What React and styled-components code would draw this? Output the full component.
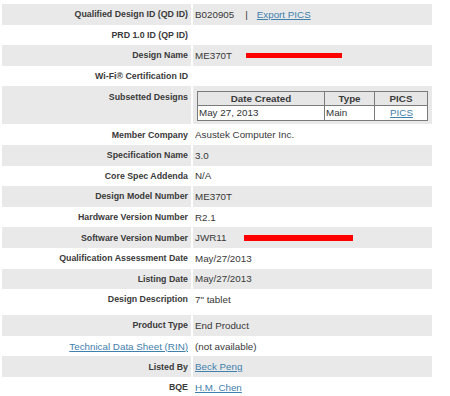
import styled, { createGlobalStyle } from "styled-components";

const Global = createGlobalStyle`
  body {
    margin: 0;
    background: #fff;
    font-family: "Liberation Sans", Arial, sans-serif;
    color: #333;
  }
`

const Sheet = styled.div`
  display: flex;
  flex-direction: column;
  width: 430px;
  margin: 4px 0 0 2px;
`

const Row = styled.div`
  display: grid;
  grid-template-columns: 189px 1fr;
  column-gap: 2px;
  height: ${p => p.$h || 20.6}px;
  background: ${p => (p.$shade ? "#e9e9e9" : "#fff")};
`

const Label = styled.div`
  padding: ${p => p.$top || 0}px 3px 0 0;
  display: flex;
  align-items: ${p => (p.$top ? "flex-start" : "center")};
  justify-content: flex-end;
  font-size: 8.8px;
  font-weight: bold;
  color: #3a3a3a;
  white-space: nowrap;
  border-right: 2px solid #fff;
  margin-right: -2px;
`

const Value = styled.div`
  padding: ${p => p.$top || 0}px 0 0 2px;
  display: flex;
  align-items: ${p => (p.$top ? "flex-start" : "center")};
  font-size: 9.8px;
  color: #383838;
  white-space: nowrap;
`

const A = styled.a`
  color: #3f80ad;
  text-decoration: underline;
  cursor: pointer;
`

const LinkLabel = styled(A)`
  font-weight: normal;
  font-size: 9.8px;
`

const Sep = styled.span`
  margin: 0 9px 0 11px;
`

const Redact = styled.span`
  display: inline-block;
  width: ${p => p.$w}px;
  height: ${p => p.$hh || 5}px;
  background: #f00;
  margin-left: ${p => p.$ml}px;
`

const Sub = styled.div`
  padding: 5px 0 0 4px;
`

const SubTable = styled.div`
  display: grid;
  grid-template-columns: 126px 50px 53px;
  width: 229px;
  border: 1px solid #7a7a7a;
  background: #fff;
`

const Head = styled.div`
  height: 13px;
  line-height: 13px;
  background: #e6e6e6;
  font-weight: bold;
  font-size: 9.8px;
  color: #3a3a3a;
  text-align: center;
  border-bottom: 1px solid #7a7a7a;
  border-left: ${p => (p.$first ? "none" : "1px solid #7a7a7a")};
`

const Cell = styled.div`
  height: 14px;
  line-height: 14px;
  font-size: 9.8px;
  padding-left: 1px;
  text-align: ${p => (p.$center ? "center" : "left")};
  border-left: ${p => (p.$first ? "none" : "1px solid #7a7a7a")};
`

const rows = [
  { label: "Qualified Design ID (QD ID)", value: <>B020905<Sep>|</Sep><A>Export PICS</A></> },
  { label: "PRD 1.0 ID (QP ID)", value: "" },
  { label: "Design Name", value: <>ME370T<Redact $w={96} $ml={14} /></> },
  { label: "Wi-Fi® Certification ID", value: "" },
  { label: "Subsetted Designs", sub: true },
  { label: "Member Company", value: "Asustek Computer Inc." },
  { label: "Specification Name", value: "3.0" },
  { label: "Core Spec Addenda", value: "N/A" },
  { label: "Design Model Number", value: "ME370T" },
  { label: "Hardware Version Number", value: "R2.1" },
  { label: "Software Version Number", value: <>JWR11<Redact $w={109} $ml={18} $hh={6} /></> },
  { label: "Qualification Assessment Date", value: "May/27/2013" },
  { label: "Listing Date", value: "May/27/2013" },
  { label: "Design Description", value: "7\" tablet", h: 26, top: 5 },
  { label: "Product Type", value: "End Product" },
  { label: <LinkLabel>Technical Data Sheet (RIN)</LinkLabel>, value: "(not available)" },
  { label: "Listed By", value: <A>Beck Peng</A> },
  { label: "BQE", value: <A>H.M. Chen</A> },
]

export default function App() {
  return (
    <>
      <Global />
      <Sheet>
        {rows.map((r, i) => (
          <Row key={i} $shade={i % 2 === 0} $h={r.sub ? 38 : r.h}>
            <Label $top={r.sub ? 6 : r.top}>{r.label}</Label>
            {r.sub ? (
              <Sub>
                <SubTable>
                  <Head $first>Date Created</Head>
                  <Head>Type</Head>
                  <Head>PICS</Head>
                  <Cell $first>May 27, 2013</Cell>
                  <Cell>Main</Cell>
                  <Cell $center><A>PICS</A></Cell>
                </SubTable>
              </Sub>
            ) : (
              <Value $top={r.top}>{r.value}</Value>
            )}
          </Row>
        ))}
      </Sheet>
    </>
  )
}
